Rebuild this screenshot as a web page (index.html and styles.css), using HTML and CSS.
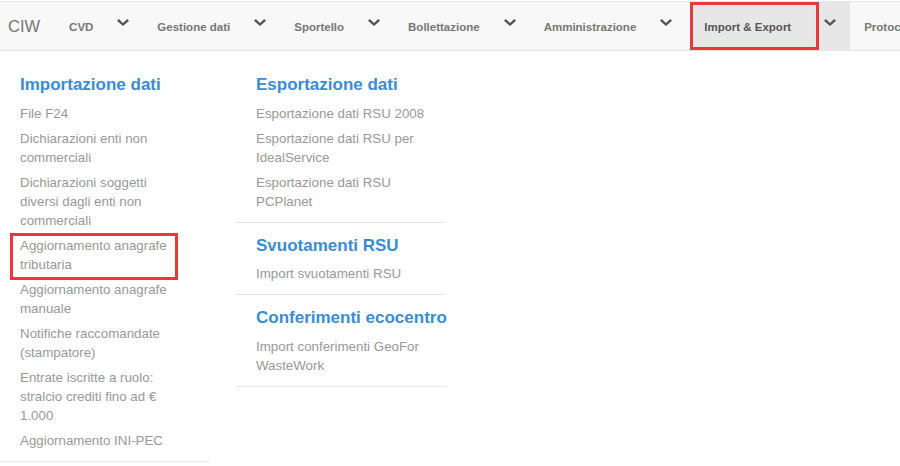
FILE: index.html
```html
<!DOCTYPE html>
<html lang="it">

<head>
    <meta charset="UTF-8">
    <meta name="viewport" content="width=device-width, initial-scale=1.0">
    <title>CIW - Import &amp; Export</title>
    <link rel="stylesheet" href="styles.css">
</head>

<body>
    <nav class="navbar">
        <a class="brand" href="#">CIW</a>
        <ul class="nav">
            <li class="nav-item">
                <a class="nav-link" href="#">CVD</a>
                <span class="caret"><svg viewBox="0 0 12 7"><polygon points="0,1.8 1.8,0 6,4 10.2,0 12,1.8 6,7" /></svg></span>
            </li>
            <li class="nav-item">
                <a class="nav-link" href="#">Gestione dati</a>
                <span class="caret"><svg viewBox="0 0 12 7"><polygon points="0,1.8 1.8,0 6,4 10.2,0 12,1.8 6,7" /></svg></span>
            </li>
            <li class="nav-item">
                <a class="nav-link" href="#">Sportello</a>
                <span class="caret"><svg viewBox="0 0 12 7"><polygon points="0,1.8 1.8,0 6,4 10.2,0 12,1.8 6,7" /></svg></span>
            </li>
            <li class="nav-item">
                <a class="nav-link" href="#">Bollettazione</a>
                <span class="caret"><svg viewBox="0 0 12 7"><polygon points="0,1.8 1.8,0 6,4 10.2,0 12,1.8 6,7" /></svg></span>
            </li>
            <li class="nav-item">
                <a class="nav-link" href="#">Amministrazione</a>
                <span class="caret"><svg viewBox="0 0 12 7"><polygon points="0,1.8 1.8,0 6,4 10.2,0 12,1.8 6,7" /></svg></span>
            </li>
            <li class="nav-item active">
                <a class="nav-link marked" href="#">Import &amp; Export</a>
                <span class="caret"><svg viewBox="0 0 12 7"><polygon points="0,1.8 1.8,0 6,4 10.2,0 12,1.8 6,7" /></svg></span>
            </li>
            <li class="nav-item">
                <a class="nav-link" href="#">Protocollo</a>
                <span class="caret"><svg viewBox="0 0 12 7"><polygon points="0,1.8 1.8,0 6,4 10.2,0 12,1.8 6,7" /></svg></span>
            </li>
        </ul>
    </nav>

    <div class="mega-menu">
        <div class="menu-col">
            <div class="menu-section">
                <h3>Importazione dati</h3>
                <ul class="menu-links">
                    <li><a href="#">File F24</a></li>
                    <li><a href="#">Dichiarazioni enti non commerciali</a></li>
                    <li><a href="#">Dichiarazioni soggetti diversi dagli enti non commerciali</a></li>
                    <li class="marked"><a href="#">Aggiornamento anagrafe tributaria</a></li>
                    <li><a href="#">Aggiornamento anagrafe manuale</a></li>
                    <li><a href="#">Notifiche raccomandate (stampatore)</a></li>
                    <li><a href="#">Entrate iscritte a ruolo: stralcio crediti fino ad € 1.000</a></li>
                    <li><a href="#">Aggiornamento INI-PEC</a></li>
                </ul>
            </div>
        </div>

        <div class="menu-col">
            <div class="menu-section">
                <h3>Esportazione dati</h3>
                <ul class="menu-links">
                    <li><a href="#">Esportazione dati RSU 2008</a></li>
                    <li><a href="#">Esportazione dati RSU per IdealService</a></li>
                    <li><a href="#">Esportazione dati RSU PCPlanet</a></li>
                </ul>
            </div>
            <div class="menu-section">
                <h3>Svuotamenti RSU</h3>
                <ul class="menu-links">
                    <li><a href="#">Import svuotamenti RSU</a></li>
                </ul>
            </div>
            <div class="menu-section">
                <h3>Conferimenti ecocentro</h3>
                <ul class="menu-links">
                    <li><a href="#">Import conferimenti GeoFor WasteWork</a></li>
                </ul>
            </div>
        </div>
    </div>
</body>

</html>
```

FILE: styles.css
```css
body {
    font-family: "Liberation Sans", Arial, sans-serif;
    background-color: #fff;
    margin: 0;
    overflow: hidden;
}

a {
    text-decoration: none;
}

/* top navbar */
.navbar {
    display: flex;
    margin-top: 1px;
    height: 50px;
    box-sizing: border-box;
    background-color: #f8f8f8;
    border-top: 1px solid #e7e7e7;
    border-bottom: 1px solid #e7e7e7;
    white-space: nowrap;
    overflow: hidden;
}

.brand {
    padding: 0 15px 0 8px;
    line-height: 48px;
    font-size: 16.5px;
    color: #777;
}

.nav {
    display: flex;
    list-style: none;
    margin: 0;
    padding: 0;
}

.nav-item {
    display: flex;
}

.nav-link {
    position: relative;
    padding: 15px 19px 13px 14px;
    line-height: 20px;
    font-size: 11.5px;
    font-weight: bold;
    color: #777;
}

.caret {
    padding: 17px 14px 0 5px;
}

.caret svg {
    display: block;
    width: 12px;
    height: 7px;
    fill: #555;
}

.nav-item.active {
    margin-left: 4px;
    background-color: #e7e7e7;
}

.nav-item.active .nav-link {
    color: #555;
    padding-right: 28px;
}

.nav-link.marked::after {
    content: "";
    position: absolute;
    top: 0;
    left: 0;
    right: 0;
    bottom: 0;
    border: 3px solid #e8383d;
}

/* dropdown panel */
.mega-menu {
    display: flex;
    gap: 27.5px;
    padding-top: 11px;
}

.menu-col {
    width: 208.5px;
}

.menu-section {
    padding: 14px 20px 8px;
    border-bottom: 1px solid #e5e5e5;
}

.menu-section h3 {
    margin: 0 0 6px;
    font-size: 17px;
    line-height: 18.7px;
    font-weight: bold;
    color: #3a8cd4;
    white-space: nowrap;
}

.menu-links {
    list-style: none;
    margin: 0;
    padding: 0;
}

.menu-links li {
    position: relative;
    padding: 3px 0;
    font-size: 13.33px;
    line-height: 19px;
}

.menu-links a {
    color: #999;
}

.menu-links li.marked::after {
    content: "";
    position: absolute;
    top: 0;
    left: -10px;
    width: 168px;
    height: 47px;
    box-sizing: border-box;
    border: 3px solid #e8383d;
}
```
